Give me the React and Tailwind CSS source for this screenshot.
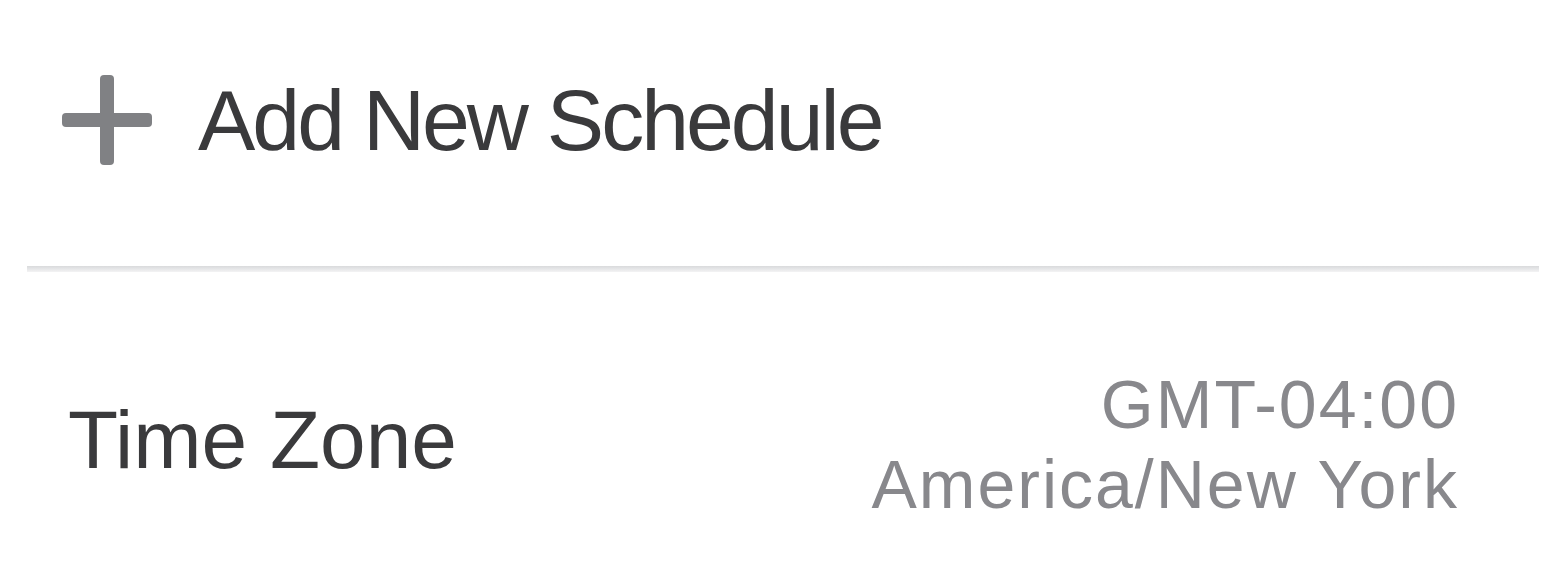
import React from "react";

function PlusIcon() {
  return (
    <svg width="90" height="90" viewBox="0 0 90 90" className="shrink-0">
      <rect x="38" y="0" width="14" height="90" rx="4" fill="#808184" />
      <rect x="0" y="38" width="90" height="14" rx="4" fill="#808184" />
    </svg>
  );
}

export default function App() {
  return (
    <div
      className="w-[1566px] h-[580px] bg-white overflow-hidden"
      style={{ fontFamily: '"Liberation Sans", Arial, sans-serif' }}
    >
      {/* add new schedule */}
      <div className="h-[266px] flex items-center pl-[62px] pb-[26px] gap-[46px]">
        <PlusIcon />
        <span className="text-[86px] leading-none text-[#3a3a3c] tracking-[-3px]">
          Add New Schedule
        </span>
      </div>
      {/* divider */}
      <div className="mx-[27px] h-[6px] bg-gradient-to-b from-[#d9dadc] to-[#f3f3f4]" />
      {/* time zone */}
      <div className="flex items-start justify-between pl-[68px] pr-[107px] pt-[100px]">
        <span className="mt-[27px] text-[82px] leading-none text-[#3a3a3c] tracking-[0px]">
          Time Zone
        </span>
        <div className="-mt-[8px] flex flex-col items-end text-[68px] leading-[80px] text-[#88888c] tracking-[2px]">
          <span>GMT-04:00</span>
          <span>America/New York</span>
        </div>
      </div>
    </div>
  );
}
